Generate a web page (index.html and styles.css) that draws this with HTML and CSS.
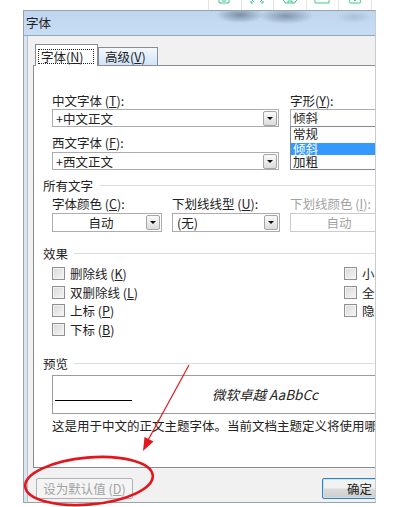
FILE: index.html
```html
<!DOCTYPE html>
<html lang="zh-CN">
<head>
    <meta charset="UTF-8">
    <meta name="viewport" content="width=device-width, initial-scale=1.0">
    <title>字体</title>
    <link rel="stylesheet" href="styles.css">
</head>
<body>
    <div class="toolbar">
        <div class="tool"><svg viewBox="0 0 16 4"><path d="M2 0 V3 H12 V0 M5 1 H9"/></svg></div>
        <div class="tool"><svg viewBox="0 0 16 4"><path d="M3 0 L5 2 M2 1 V3 H4 M13 0 L11 2 M14 1 V3 H12"/></svg></div>
        <div class="tool"><svg viewBox="0 0 16 4"><path d="M1 0 L3 2 V3 H13 V2 L15 0 M6 3 V1 H10 V3"/></svg></div>
        <div class="tool"><svg viewBox="0 0 16 4"><path d="M1 0 V3 H15 V0"/></svg></div>
        <div class="tool"><svg viewBox="0 0 16 4"><path d="M3 0 Q1 3 4 3 H12 Q15 3 13 0 M7 0 Q8 2 9 0"/></svg></div>
        <div class="tool"></div>
    </div>

    <div class="dialog">
        <div class="titlebar">字体</div>
        <div class="body">
            <div class="tabs">
                <div class="tab active"><span class="focus">字体(<u>N</u>)</span></div>
                <div class="tab">高级(<u>V</u>)</div>
            </div>

            <div class="panel">
                <div class="fonts">
                    <div class="names">
                        <div class="label">中文字体 (<u>T</u>):</div>
                        <div class="combo"><span class="value">+中文正文</span><span class="drop"></span></div>
                        <div class="label second">西文字体 (<u>F</u>):</div>
                        <div class="combo second-combo"><span class="value">+西文正文</span><span class="drop"></span></div>
                    </div>
                    <div class="style">
                        <div class="label">字形(<u>Y</u>):</div>
                        <div class="field">倾斜</div>
                        <div class="list">
                            <div class="item first">常规</div>
                            <div class="item selected">倾斜</div>
                            <div class="item">加粗</div>
                        </div>
                    </div>
                </div>

                <div class="group">所有文字</div>
                <div class="colors">
                    <div class="color-cell">
                        <div class="label">字体颜色 (<u>C</u>):</div>
                        <div class="combo tall"><span class="value center">自动</span><span class="drop"></span></div>
                    </div>
                    <div class="color-cell narrow">
                        <div class="label">下划线线型 (<u>U</u>):</div>
                        <div class="combo tall"><span class="value indent">(无)</span><span class="drop"></span></div>
                    </div>
                    <div class="color-cell disabled">
                        <div class="label">下划线颜色 (<u>I</u>):</div>
                        <div class="combo tall"><span class="value center">自动</span><span class="drop hidden"></span></div>
                    </div>
                </div>

                <div class="group effects-head">效果</div>
                <div class="effects">
                    <div class="effects-col">
                        <div class="check-row"><span class="box"></span><span>删除线 (<u>K</u>)</span></div>
                        <div class="check-row"><span class="box"></span><span>双删除线 (<u>L</u>)</span></div>
                        <div class="check-row"><span class="box"></span><span>上标 (<u>P</u>)</span></div>
                        <div class="check-row"><span class="box"></span><span>下标 (<u>B</u>)</span></div>
                    </div>
                    <div class="effects-col">
                        <div class="check-row"><span class="box"></span><span>小型大写字母 (<u>M</u>)</span></div>
                        <div class="check-row"><span class="box"></span><span>全部大写字母 (<u>A</u>)</span></div>
                        <div class="check-row"><span class="box"></span><span>隐藏 (<u>H</u>)</span></div>
                    </div>
                </div>

                <div class="group preview-head">预览</div>
                <div class="preview">
                    <span class="pv-line"></span>
                    <span class="pv-text">微软卓越 AaBbCc</span>
                </div>
                <div class="desc">这是用于中文的正文主题字体。当前文档主题定义将使用哪种字体。</div>
            </div>

            <div class="buttons">
                <button class="btn btn-disabled">设为默认值 (<u>D</u>)</button>
                <button class="btn btn-ok">确定</button>
            </div>
        </div>
    </div>

    <svg class="marks" viewBox="0 0 403 507">
        <ellipse cx="89" cy="481" rx="64" ry="23.5" transform="rotate(-5 89 481)" fill="none" stroke="#e3161d" stroke-width="2.6"/>
        <line x1="189" y1="365" x2="147" y2="442" stroke="#e3161d" stroke-width="1.2"/>
        <polygon points="143,451 144.5,437 153.5,441.5" fill="#e3161d"/>
    </svg>
</body>
</html>
```

FILE: styles.css
```css
* { box-sizing: border-box; }
body {
    margin: 0;
    width: 403px;
    height: 507px;
    background: #fff;
    font-family: "Noto Sans CJK SC", "Liberation Sans", sans-serif;
    font-size: 12.5px;
    color: #222;
    position: relative;
    overflow: hidden;
}
u { text-underline-offset: 1px; }

/* toolbar strip above the dialog */
.toolbar {
    display: flex;
    height: 10px;
    padding-left: 208px;
}
.tool {
    width: 33px;
    border-left: 1px solid #e3e3e3;
    display: flex;
    justify-content: center;
}
.tool svg {
    width: 16px;
    height: 4px;
    fill: none;
    stroke: #3cc88a;
    stroke-width: 1;
}

.dialog {
    margin-left: 23px;
    width: 353px;
    height: 493px;
    border: 1px solid #97a3af;
    border-right-color: #c6ccd2;
    background: #dbe5ef;
    overflow: hidden;
    display: flex;
    flex-direction: column;
}
.titlebar {
    flex: none;
    height: 25px;
    padding-left: 2px;
    line-height: 23px;
    border-bottom: 1px solid #93a8bd;
    background:
        radial-gradient(ellipse 24px 8px at 216px 4px, rgba(55, 70, 92, 0.5), transparent),
        radial-gradient(ellipse 28px 8px at 262px 5px, rgba(55, 70, 92, 0.45), transparent),
        radial-gradient(ellipse 18px 6px at 330px 6px, rgba(90, 110, 135, 0.22), transparent),
        linear-gradient(#bfd6ef, #c8ddf4);
}
.body {
    flex: 1;
    margin-left: 3px;
    border-left: 1px solid #b7c0ca;
    background: #f1f1f1;
    padding: 8px 0 0 5px;
    display: flex;
    flex-direction: column;
}

/* tabs */
.tabs {
    display: flex;
    align-items: flex-end;
    height: 22px;
    margin-bottom: -1px;
    padding-left: 2px;
    position: relative;
    z-index: 1;
}
.tab {
    width: 60px;
    height: 18px;
    margin-bottom: 1px;
    padding-left: 6px;
    line-height: 17px;
    border: 1px solid #898c95;
    border-bottom: none;
    background: linear-gradient(#f4f8fc, #cfe4f8);
}
.tab.active {
    width: 63px;
    height: 22px;
    margin-bottom: 0;
    padding: 4px 0 0 2px;
    background: #fff;
}
.focus {
    display: block;
    width: 56px;
    height: 15px;
    padding-left: 2px;
    line-height: 13px;
    border: 1px dotted #222;
}

.panel {
    flex: none;
    width: 430px;
    height: 403px;
    background: #fff;
    border: 1px solid #898c95;
    padding: 27px 0 0 18px;
}
.label {
    height: 15px;
    line-height: 15px;
    white-space: nowrap;
}

.fonts {
    display: flex;
    gap: 11px;
}
.names { width: 227px; flex: none; }
.style { width: 110px; flex: none; }
.label.second { margin-top: 8px; }

.combo {
    display: flex;
    align-items: center;
    height: 18px;
    margin-top: 1px;
    padding: 0 1px 0 3px;
    border: 1px solid #abadb3;
    background: #fff;
    white-space: nowrap;
}
.combo.second-combo { margin-top: 2px; }
.combo.tall {
    height: 19px;
    margin-top: 2px;
}
.value { flex: 1; line-height: 15px; }
.value.center { text-align: center; }
.value.indent { padding-left: 1px; }
.drop {
    width: 14px;
    height: 15px;
    border: 1px solid #a5a5a5;
    border-radius: 2px;
    background: linear-gradient(#fafafa, #dcdcdc);
    display: flex;
    align-items: center;
    justify-content: center;
}
.drop::after {
    content: "";
    border-left: 3px solid transparent;
    border-right: 3px solid transparent;
    border-top: 3px solid #111;
}
.drop.hidden { visibility: hidden; }

.field {
    height: 18px;
    margin-top: 1px;
    padding-left: 2px;
    line-height: 16px;
    border: 1px solid #abadb3;
}
.list {
    height: 44px;
    margin-top: -1px;
    border: 1px solid #828790;
    overflow: hidden;
}
.item {
    height: 13px;
    padding-left: 2px;
    line-height: 13px;
}
.item.first {
    height: 16px;
    line-height: 14px;
}
.item.selected {
    height: 12px;
    line-height: 12px;
    background: #3399ff;
    color: #fff;
}

/* group headers with a rule after them */
.group {
    display: flex;
    align-items: center;
    gap: 7px;
    height: 15px;
    margin: 8px 0 0 -9px;
    line-height: 15px;
    white-space: nowrap;
}
.group::after {
    content: "";
    flex: 1;
    border-top: 1px solid #d6dee5;
}
.effects-head { margin-top: 14px; gap: 6px; }
.preview-head { margin-top: 17px; gap: 6px; }

.colors {
    display: flex;
    gap: 10px;
    margin-top: 3px;
}
.color-cell { width: 110px; flex: none; }
.color-cell.narrow { width: 108px; }
.color-cell.disabled { color: #a2a2a2; }
.color-cell.disabled .combo { border-color: #c9cbcf; }

.effects {
    display: flex;
    margin-top: 3px;
}
.effects-col { width: 292px; flex: none; }
.check-row {
    display: flex;
    align-items: center;
    gap: 5px;
    height: 18.7px;
    white-space: nowrap;
}
.box {
    flex: none;
    width: 13px;
    height: 13px;
    border: 1px solid #8f8f8f;
    background: linear-gradient(135deg, #d9d9d9, #f6f6f6);
    box-shadow: inset 0 0 0 1px #f2f2f2;
}

.preview {
    display: flex;
    align-items: flex-start;
    height: 39px;
    margin-top: 4px;
    border: 1px solid #9c9c9c;
}
.pv-line {
    width: 77px;
    height: 1px;
    margin: 24px 0 0 2px;
    background: #000;
}
.pv-text {
    margin: 8px 0 0 80px;
    line-height: 20px;
    font-size: 13.5px;
    font-style: italic;
    white-space: nowrap;
}
.desc {
    margin-top: 4px;
    line-height: 15px;
    white-space: nowrap;
}

/* bottom buttons */
.buttons {
    display: flex;
    margin-top: 10px;
    padding-left: 3px;
}
.btn {
    flex: none;
    height: 21px;
    padding: 0;
    font-family: inherit;
    font-size: 12.5px;
    line-height: 17px;
    border-radius: 2px;
    white-space: nowrap;
}
.btn-disabled {
    width: 97px;
    color: #a3a3a3;
    border: 1px solid #adb2b5;
    background: #f4f4f4;
}
.btn-ok {
    width: 75px;
    margin-left: 189px;
    color: #222;
    border: 1px solid #3c7fb1;
    background: linear-gradient(#f2f2f2 45%, #dadada 55%, #cfcfcf);
    box-shadow: inset 0 0 0 1px #bfe3f6;
}

/* red annotation drawn over the screenshot */
.marks {
    position: absolute;
    top: 0;
    left: 0;
    width: 403px;
    height: 507px;
    pointer-events: none;
}
```
